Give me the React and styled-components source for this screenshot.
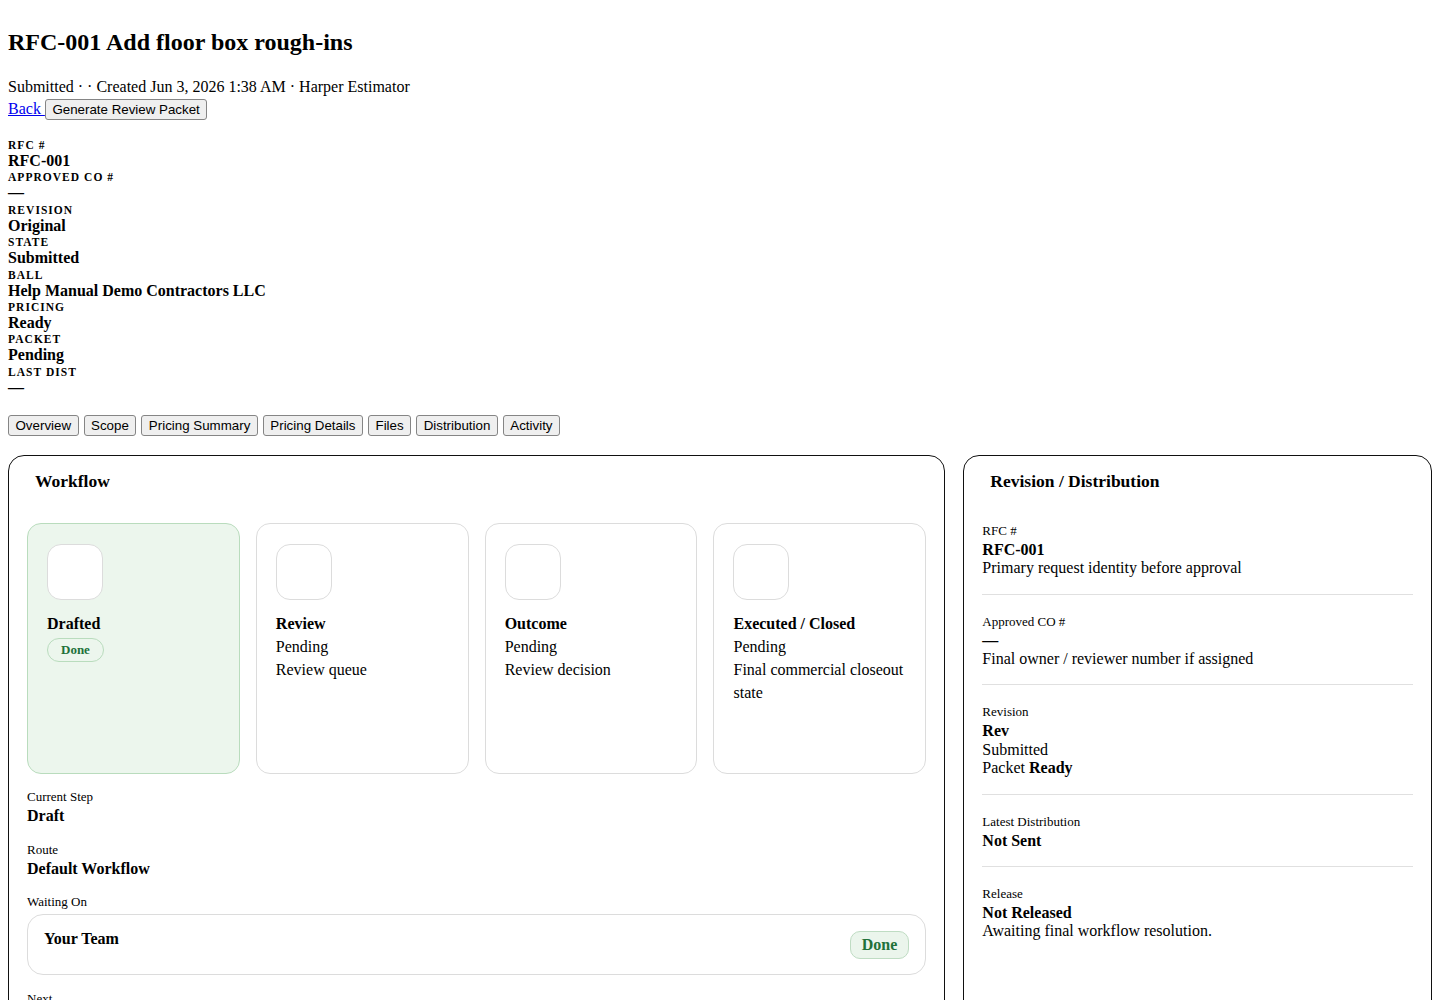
import React from "react";
import styled, { createGlobalStyle } from "styled-components";

const Global = createGlobalStyle`
  html, body { margin: 0; padding: 0; background: #fff; }
  body {
    font-family: "Liberation Serif", "Times New Roman", Times, serif;
    font-size: 16px;
    color: #000;
  }
  * { box-sizing: border-box; }
`;

const Page = styled.div`
  padding: 8px;
`;

const Title = styled.h1`
  margin: 20px 0 22px;
  font-size: 24px;
  line-height: 28px;
  font-weight: 700;
`;

const Subtitle = styled.div`
  font-size: 16px;
  line-height: 18px;
`;

const Actions = styled.div`
  display: flex;
  align-items: center;
  margin-top: 2.5px;
  height: 21px;
`;

const BackLink = styled.a`
  color: #0000ee;
  text-decoration: underline;
  white-space: pre;
  font-size: 16px;
  line-height: 18px;
`;

const Button = styled.button`
  font-family: "Liberation Sans", Arial, Helvetica, sans-serif;
  font-size: 13.33px;
  line-height: 15px;
  padding: 2px 6.5px;
  border: 1px solid #858585;
  border-radius: 3px;
  background: #efefef;
  color: #000;
  cursor: pointer;
`;

const MetaList = styled.dl`
  margin: 18.5px 0 0;
`;

const MetaLabel = styled.dt`
  font-size: 11.5px;
  line-height: 14px;
  font-weight: 700;
  text-transform: uppercase;
  letter-spacing: 0.09em;
`;

const MetaValue = styled.dd`
  margin: 0;
  font-size: 16px;
  line-height: 18.4px;
  font-weight: 700;
`;

const Tabs = styled.div`
  display: flex;
  gap: 5px;
  margin-top: 18px;
`;

const Columns = styled.div`
  display: grid;
  grid-template-columns: 2fr 1fr;
  gap: 18px;
  margin-top: 18.5px;
  align-items: stretch;
`;

const Panel = styled.section`
  border: 1px solid #111;
  border-radius: 16px;
  padding: 14px 18px 18px;
  min-height: 620px;
`;

const PanelTitle = styled.h3`
  margin: 0 0 11.5px;
  padding: 0 8px;
  font-size: 17.5px;
  line-height: 22px;
  font-weight: 700;
`;

const StepGrid = styled.div`
  display: grid;
  grid-template-columns: repeat(4, 1fr);
  gap: 16px;
  margin-top: 31px;
`;

const StepCard = styled.div`
  min-height: 251px;
  padding: 20px 19px;
  border-radius: 14px;
  border: 1px solid ${(p) => (p.$done ? "#b9dcbd" : "#dcdcdc")};
  background: ${(p) => (p.$done ? "#ecf6ed" : "#fff")};
`;

const StepIcon = styled.div`
  width: 56px;
  height: 56px;
  border-radius: 14px;
  border: 1px solid #dcdcdc;
  background: #fff;
  margin-bottom: 12.5px;
`;

const StepTitle = styled.div`
  font-weight: 700;
  font-size: 16px;
  line-height: 23px;
`;

const StepText = styled.div`
  font-size: 16px;
  line-height: 23px;
`;

const Badge = styled.span`
  display: inline-block;
  font-weight: 700;
  color: #21713a;
  border: 1px solid ${(p) => (p.$filled ? "#bfdcc3" : "#b9dcbd")};
  background: ${(p) => (p.$filled ? "#ebf5ec" : "transparent")};
  font-size: ${(p) => (p.$large ? "16px" : "13px")};
  line-height: ${(p) => (p.$large ? "26px" : "22px")};
  padding: ${(p) => (p.$large ? "0 11px" : "0 13px")};
  border-radius: ${(p) => (p.$large ? "10px" : "12px")};
  margin-top: ${(p) => (p.$large ? "1px" : "3px")};
`;

const Fields = styled.div`
  display: flex;
  flex-direction: column;
  gap: 16px;
  margin-top: 15.5px;
`;

const Field = styled.div``;

const FieldLabel = styled.div`
  font-size: 13px;
  line-height: 15px;
  margin-bottom: 3px;
`;

const FieldValue = styled.div`
  font-size: 16px;
  line-height: 18.4px;
  font-weight: 700;
`;

const WaitBox = styled.div`
  display: flex;
  justify-content: space-between;
  align-items: flex-start;
  margin-top: 5px;
  padding: 15px 16px;
  border: 1px solid #dcdcdc;
  border-radius: 16px;
`;

const WaitName = styled.div`
  font-weight: 700;
  font-size: 16px;
  line-height: 18.4px;
`;

const InfoList = styled.div`
  display: flex;
  flex-direction: column;
  padding-top: 0.5px;
`;

const InfoItem = styled.div`
  padding: 19px 0 16px;
  border-bottom: 1px solid #e0e0e0;
  &:last-child {
    border-bottom: none;
  }
`;

const InfoLabel = styled.div`
  font-size: 13px;
  line-height: 15px;
  margin-bottom: 3px;
`;

const InfoValue = styled.div`
  font-weight: 700;
  font-size: 16px;
  line-height: 18.4px;
`;

const InfoText = styled.div`
  font-size: 16px;
  line-height: 18.4px;
`;

const meta = [
  ["RFC #", "RFC-001"],
  ["Approved CO #", "—"],
  ["Revision", "Original"],
  ["State", "Submitted"],
  ["Ball", "Help Manual Demo Contractors LLC"],
  ["Pricing", "Ready"],
  ["Packet", "Pending"],
  ["Last Dist", "—"],
];

const tabs = [
  "Overview",
  "Scope",
  "Pricing Summary",
  "Pricing Details",
  "Files",
  "Distribution",
  "Activity",
];

const steps = [
  { title: "Drafted", done: true },
  { title: "Review", lines: ["Pending", "Review queue"] },
  { title: "Outcome", lines: ["Pending", "Review decision"] },
  { title: "Executed / Closed", lines: ["Pending", "Final commercial closeout state"] },
];

export default function App() {
  return (
    <Page>
      <Global />
      <Title>RFC-001 Add floor box rough-ins</Title>
      <Subtitle>Submitted · · Created Jun 3, 2026 1:38 AM · Harper Estimator</Subtitle>
      <Actions>
        <BackLink href="#">{"Back "}</BackLink>
        <Button type="button">Generate Review Packet</Button>
      </Actions>

      <MetaList>
        {meta.map(([k, v]) => (
          <React.Fragment key={k}>
            <MetaLabel>{k}</MetaLabel>
            <MetaValue>{v}</MetaValue>
          </React.Fragment>
        ))}
      </MetaList>

      <Tabs>
        {tabs.map((t) => (
          <Button type="button" key={t}>
            {t}
          </Button>
        ))}
      </Tabs>

      <Columns>
        <Panel>
          <PanelTitle>Workflow</PanelTitle>
          <StepGrid>
            {steps.map((s) => (
              <StepCard key={s.title} $done={s.done}>
                <StepIcon />
                <StepTitle>{s.title}</StepTitle>
                {s.done ? (
                  <Badge>Done</Badge>
                ) : (
                  s.lines.map((l) => <StepText key={l}>{l}</StepText>)
                )}
              </StepCard>
            ))}
          </StepGrid>
          <Fields>
            <Field>
              <FieldLabel>Current Step</FieldLabel>
              <FieldValue>Draft</FieldValue>
            </Field>
            <Field>
              <FieldLabel>Route</FieldLabel>
              <FieldValue>Default Workflow</FieldValue>
            </Field>
            <Field>
              <FieldLabel>Waiting On</FieldLabel>
              <WaitBox>
                <WaitName>Your Team</WaitName>
                <Badge $large $filled>
                  Done
                </Badge>
              </WaitBox>
            </Field>
            <Field>
              <FieldLabel>Next</FieldLabel>
              <FieldValue>Review</FieldValue>
            </Field>
          </Fields>
        </Panel>

        <Panel>
          <PanelTitle>Revision / Distribution</PanelTitle>
          <InfoList>
            <InfoItem>
              <InfoLabel>RFC #</InfoLabel>
              <InfoValue>RFC-001</InfoValue>
              <InfoText>Primary request identity before approval</InfoText>
            </InfoItem>
            <InfoItem>
              <InfoLabel>Approved CO #</InfoLabel>
              <InfoValue>—</InfoValue>
              <InfoText>Final owner / reviewer number if assigned</InfoText>
            </InfoItem>
            <InfoItem>
              <InfoLabel>Revision</InfoLabel>
              <InfoValue>Rev</InfoValue>
              <InfoText>Submitted</InfoText>
              <InfoText>
                Packet <b>Ready</b>
              </InfoText>
            </InfoItem>
            <InfoItem>
              <InfoLabel>Latest Distribution</InfoLabel>
              <InfoValue>Not Sent</InfoValue>
            </InfoItem>
            <InfoItem>
              <InfoLabel>Release</InfoLabel>
              <InfoValue>Not Released</InfoValue>
              <InfoText>Awaiting final workflow resolution.</InfoText>
            </InfoItem>
          </InfoList>
        </Panel>
      </Columns>
    </Page>
  );
}
